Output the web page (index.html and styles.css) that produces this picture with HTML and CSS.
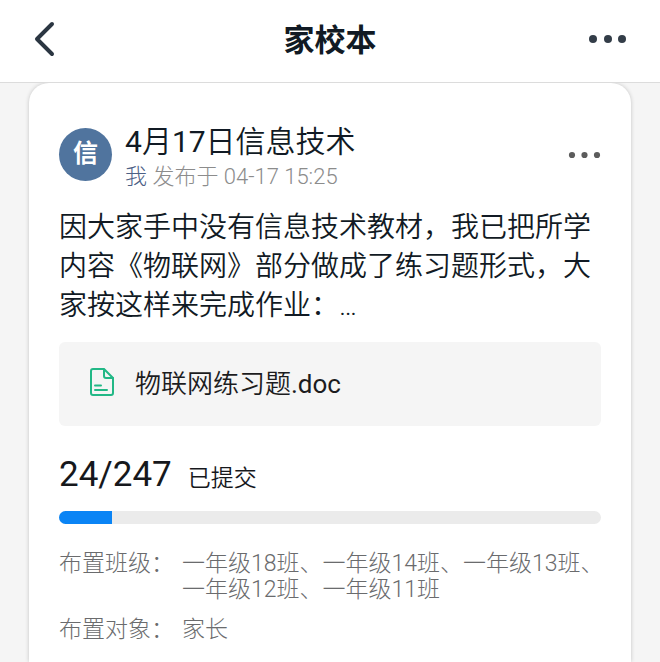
FILE: index.html
```html
<!DOCTYPE html>
<html lang="zh-CN">
<head>
  <meta charset="UTF-8">
  <meta name="viewport" content="width=device-width, initial-scale=1">
  <title>家校本</title>
  <link rel="stylesheet" href="styles.css">
</head>
<body>
  <header class="topbar">
    <button class="icon-btn" type="button" aria-label="返回">
      <svg width="24" height="40" viewBox="0 0 24 40" fill="none" stroke="#2b3642" stroke-width="4" stroke-linecap="round" stroke-linejoin="round">
        <path d="M20 5 L5 20 L20 35"/>
      </svg>
    </button>
    <h1>家校本</h1>
    <button class="icon-btn more" type="button" aria-label="更多">
      <svg width="40" height="10" viewBox="0 0 40 10" fill="#333d48">
        <circle cx="5" cy="5" r="4"/>
        <circle cx="20" cy="5" r="4"/>
        <circle cx="34" cy="5" r="4"/>
      </svg>
    </button>
  </header>

  <main class="card">
    <div class="post-head">
      <div class="avatar">信</div>
      <div class="post-info">
        <h2><span class="num">4</span>月<span class="num">17</span>日信息技术</h2>
        <p class="meta"><span class="author">我</span> 发布于 04-17 15:25</p>
      </div>
      <button class="icon-btn" type="button" aria-label="作业操作">
        <svg width="34" height="8" viewBox="0 0 34 8" fill="#5c5c5c">
          <circle cx="5" cy="4" r="3.1"/>
          <circle cx="17.500" cy="4" r="3.1"/>
          <circle cx="30" cy="4" r="3.1"/>
        </svg>
      </button>
    </div>

    <p class="content">因大家手中没有信息技术教材，我已把所学内容《物联网》部分做成了练习题形式，大家按这样来完成作业：…</p>

    <a class="file" href="#">
      <svg width="26" height="30" viewBox="0 0 26 30" fill="none" stroke="#22b886" stroke-width="2" stroke-linecap="round" stroke-linejoin="round">
        <path d="M4 2 H15 L24 11 V26 Q24 28 22 28 H4 Q2 28 2 26 V4 Q2 2 4 2 Z"/>
        <path d="M15 2.500 V9 Q15 11 17 11 H24"/>
        <path d="M6 18.500 H12 M6 23 H18"/>
      </svg>
      <span>物联网练习题<span class="num">.doc</span></span>
    </a>

    <div class="stats">
      <span class="count num">24/247</span>
      <span class="count-label">已提交</span>
    </div>
    <div class="progress">
      <div class="progress-bar" style="width: 9.8%"></div>
    </div>

    <dl class="details">
      <dt>布置班级：</dt>
      <dd>一年级18班、一年级14班、一年级13班、<br>一年级12班、一年级11班</dd>
      <dt>布置对象：</dt>
      <dd>家长</dd>
    </dl>
  </main>
</body>
</html>
```
FILE: styles.css
```css
* {
  box-sizing: border-box;
}
body {
  margin: 0;
  min-height: 100vh;
  display: flex;
  flex-direction: column;
  background: #f5f5f5;
  color: #111a24;
  font-family: Roboto, "Noto Sans CJK SC", sans-serif;
  font-weight: 350;
}
h1, h2, p, dl, dd {
  margin: 0;
}
.num {
  font-weight: 400;
}
.icon-btn {
  display: flex;
  padding: 0;
  border: none;
  background: none;
  cursor: pointer;
}

/* top bar */
.topbar {
  display: grid;
  grid-template-columns: 1fr auto 1fr;
  align-items: center;
  height: 83px;
  padding: 0 32px 5px;
  background: #fff;
  border-bottom: 1px solid #dcdcdc;
}
.topbar h1 {
  padding-top: 4px;
  font-size: 31px;
  line-height: 40px;
  font-weight: 700;
}
.more {
  justify-self: end;
}

/* homework card */
.card {
  flex: 1;
  margin: 0 29px;
  padding: 34px 30px 16px;
  background: #fff;
  border-radius: 20px 20px 0 0;
  box-shadow: 0 0 4px rgba(0, 0, 0, 0.2);
  clip-path: inset(0 -6px 0 -6px);
}
.post-head {
  display: flex;
  align-items: center;
}
.avatar {
  width: 53px;
  height: 53px;
  border-radius: 50%;
  background: #50749e;
  color: #fff;
  font-size: 25px;
  line-height: 52px;
  font-weight: 700;
  text-align: center;
}
.post-info {
  flex: 1;
  margin-left: 13px;
  padding-top: 5px;
}
.post-info h2 {
  font-size: 30px;
  line-height: 40px;
  font-weight: 350;
}
.meta {
  font-size: 22px;
  line-height: 30px;
  font-weight: 300;
  color: #8c8c8c;
}
.author {
  color: #4c6085;
}
.content {
  margin-top: 16px;
  font-size: 28px;
  line-height: 39px;
}
.file {
  display: flex;
  align-items: center;
  gap: 20px;
  height: 84px;
  margin-top: 17px;
  padding: 0 30px 6px;
  border-radius: 6px;
  background: #f5f5f5;
  color: #1c1c1e;
  font-size: 26px;
  text-decoration: none;
}
.file svg {
  margin-top: 2px;
}

/* submit progress */
.stats {
  display: flex;
  align-items: baseline;
  gap: 16px;
  margin-top: 24px;
  line-height: 50px;
  color: #16181c;
}
.count {
  font-size: 35px;
}
.count-label {
  font-size: 23px;
}
.progress {
  height: 13px;
  margin-top: 7px;
  border-radius: 7px;
  background: #ebebeb;
  overflow: hidden;
}
.progress-bar {
  height: 100%;
  background: #0a84f5;
}

.details {
  display: grid;
  grid-template-columns: 123px 1fr;
  row-gap: 14px;
  margin-top: 27px;
  font-size: 23px;
  line-height: 26px;
  font-weight: 300;
  color: #6a6b6d;
  white-space: nowrap;
}
```
